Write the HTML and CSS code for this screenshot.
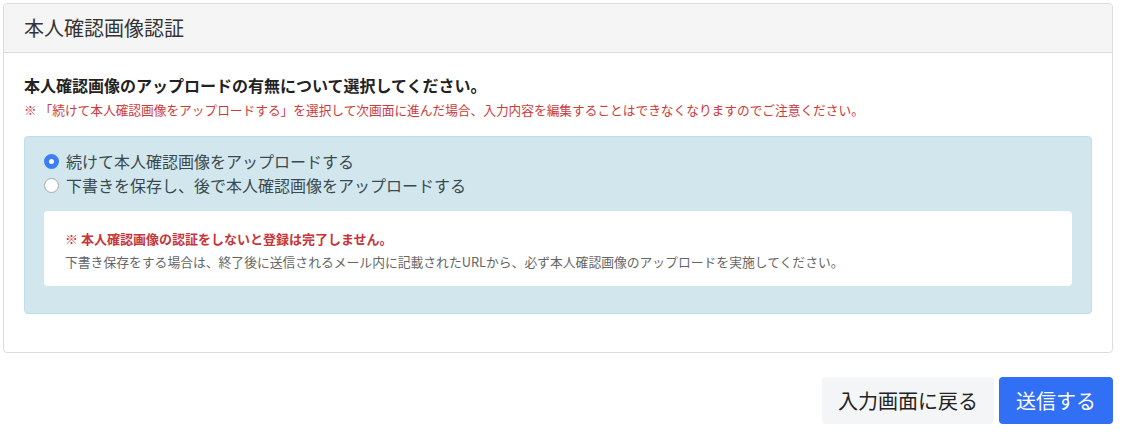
FILE: index.html
```html
<!doctype html>
<html lang="ja">
  <head>
    <meta charset="utf-8">
    <meta name="viewport" content="width=device-width, initial-scale=1">
    <title>本人確認画像認証</title>
    <link rel="stylesheet" href="styles.css">
  </head>
  <body>
    <div class="page">
      <section class="card">
        <h2 class="card-header">本人確認画像認証</h2>
        <div class="card-body">
          <p class="lead">本人確認画像のアップロードの有無について選択してください。</p>
          <p class="note">※ 「続けて本人確認画像をアップロードする」を選択して次画面に進んだ場合、入力内容を編集することはできなくなりますのでご注意ください。</p>

          <div class="alert">
            <label class="radio">
              <input type="radio" name="upload" checked>
              <span>続けて本人確認画像をアップロードする</span>
            </label>
            <label class="radio">
              <input type="radio" name="upload">
              <span>下書きを保存し、後で本人確認画像をアップロードする</span>
            </label>

            <div class="info-box">
              <p class="warn">※ 本人確認画像の認証をしないと登録は完了しません。</p>
              <p class="desc">下書き保存をする場合は、終了後に送信されるメール内に記載されたURLから、必ず本人確認画像のアップロードを実施してください。</p>
            </div>
          </div>
        </div>
      </section>

      <div class="actions">
        <button class="btn btn-back" type="button">入力画面に戻る</button>
        <button class="btn btn-submit" type="submit">送信する</button>
      </div>
    </div>
  </body>
</html>
```

FILE: styles.css
```css
body {
  margin: 0;
  background: #fff;
  color: #222;
  font-family: "Noto Sans CJK JP", "Noto Sans", sans-serif;
}
.page {
  padding: 3px 10px 0 3px;
}
.card {
  border: 1px solid #dcdcdc;
  border-radius: 4px;
  background: #fff;
}
.card-header {
  margin: 0;
  padding: 0 20px;
  height: 48px;
  line-height: 48px;
  font-size: 20px;
  font-weight: normal;
  color: #333;
  background: #f5f5f5;
  border-bottom: 1px solid #dcdcdc;
  border-radius: 4px 4px 0 0;
}
.card-body {
  padding: 21px 20px 38px;
}
.lead {
  margin: 0;
  font-size: 16px;
  font-weight: bold;
  line-height: 22px;
  color: #222;
}
.note {
  margin: 5px 0 0;
  font-size: 12.7px;
  line-height: 18px;
  color: #cc3a3a;
}
.alert {
  margin-top: 17px;
  padding: 12px 19px 27px;
  background: #d1e7ed;
  border: 1px solid #bedfe7;
  border-radius: 4px;
}
.radio {
  display: flex;
  align-items: center;
  gap: 7px;
  font-size: 16px;
  line-height: 24px;
  color: #3a4950;
}
.radio input {
  appearance: none;
  margin: 0;
  width: 15px;
  height: 15px;
  border: 1px solid #a8a8a8;
  border-radius: 50%;
  background: #fff;
}
.radio input:checked {
  border: 5px solid #3d7ff2;
  background: #fff;
}
.info-box {
  margin-top: 14px;
  padding: 18px 21px 14px;
  background: #fff;
  border-radius: 4px;
}
.warn {
  margin: 0;
  font-size: 13px;
  font-weight: bold;
  line-height: 20px;
  color: #c7353b;
}
.desc {
  margin: 3px 0 0;
  font-size: 12.8px;
  line-height: 20px;
  color: #666;
}
.actions {
  display: flex;
  justify-content: flex-end;
  gap: 5px;
  margin-top: 24px;
}
.btn {
  height: 47px;
  border: none;
  border-radius: 4px;
  font-family: inherit;
  font-size: 20px;
}
.btn-back {
  padding: 0 16px;
  background: #f4f5f7;
  color: #222;
}
.btn-submit {
  padding: 0 17px;
  background: #316ff5;
  color: #fff;
}
```
